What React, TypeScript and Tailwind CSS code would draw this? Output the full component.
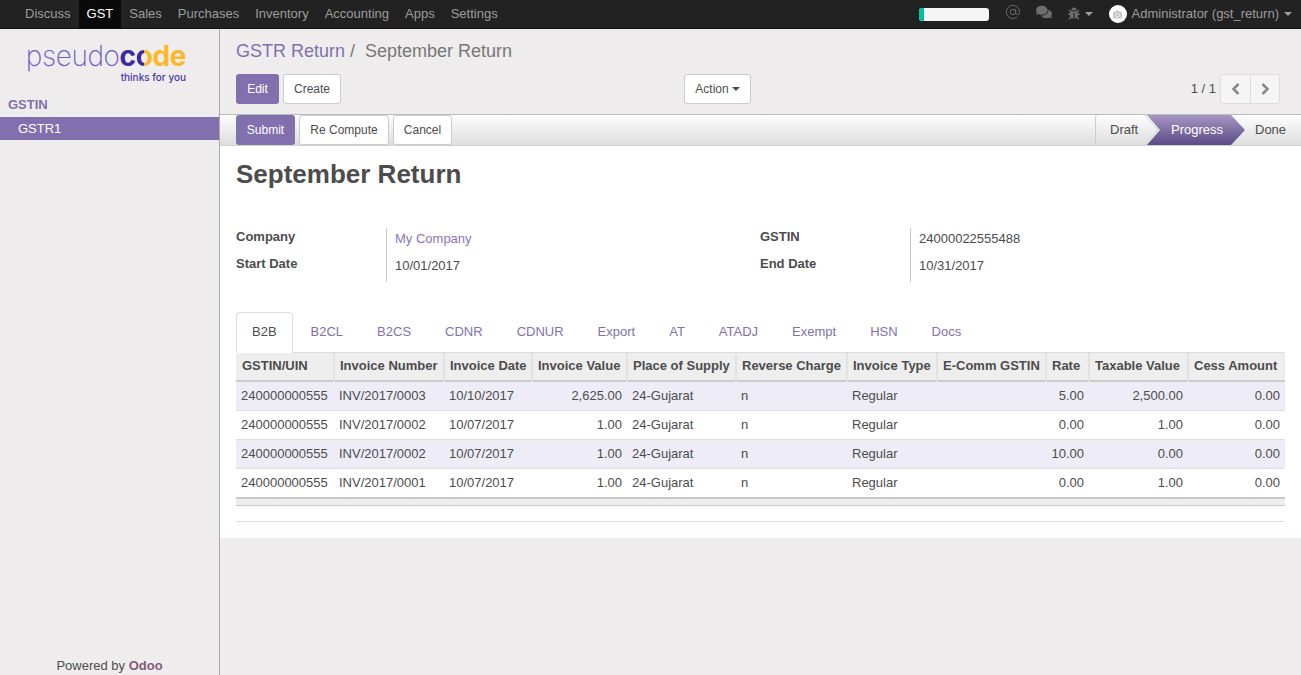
import React from "react";
import { FaComments, FaBug, FaCamera } from "react-icons/fa";
import { AtSign } from "lucide-react";

const nav = ["Discuss", "GST", "Sales", "Purchases", "Inventory", "Accounting", "Apps", "Settings"];
const tabs = ["B2B", "B2CL", "B2CS", "CDNR", "CDNUR", "Export", "AT", "ATADJ", "Exempt", "HSN", "Docs"];
const cols = [
  { t: "GSTIN/UIN", w: 98 },
  { t: "Invoice Number", w: 110 },
  { t: "Invoice Date", w: 88 },
  { t: "Invoice Value", w: 95, r: true },
  { t: "Place of Supply", w: 109 },
  { t: "Reverse Charge", w: 111 },
  { t: "Invoice Type", w: 90 },
  { t: "E-Comm GSTIN", w: 109 },
  { t: "Rate", w: 43, r: true },
  { t: "Taxable Value", w: 99, r: true },
  { t: "Cess Amount", w: 97, r: true },
];
const rows = [
  ["240000000555", "INV/2017/0003", "10/10/2017", "2,625.00", "24-Gujarat", "n", "Regular", "", "5.00", "2,500.00", "0.00"],
  ["240000000555", "INV/2017/0002", "10/07/2017", "1.00", "24-Gujarat", "n", "Regular", "", "0.00", "1.00", "0.00"],
  ["240000000555", "INV/2017/0002", "10/07/2017", "1.00", "24-Gujarat", "n", "Regular", "", "10.00", "0.00", "0.00"],
  ["240000000555", "INV/2017/0001", "10/07/2017", "1.00", "24-Gujarat", "n", "Regular", "", "0.00", "1.00", "0.00"],
];

function Caret({ className }: { className?: string }) {
  return <span className={"inline-block w-0 h-0 border-x-4 border-x-transparent border-t-4 border-t-current align-middle " + (className ?? "")} />;
}

function Chevron({ dir }: { dir: "l" | "r" }) {
  return (
    <svg width="9" height="12" viewBox="0 0 9 12" fill="none" stroke="#8a8a8a" strokeWidth="2.6">
      <polyline points={dir === "l" ? "7.5,1 2.5,6 7.5,11" : "1.5,1 6.5,6 1.5,11"} />
    </svg>
  );
}

function Logo() {
  return (
    <div className="flex flex-col items-end w-[158px] ml-[28px] mt-[12px] h-[44px] font-['Inter',sans-serif]">
      <div className="text-[28px] leading-[30px] tracking-[-0.4px] whitespace-nowrap">
        <span className="font-extralight text-[#6e5fc4]">pseudo</span>
        <span className="font-bold text-[#3b2a9e]">c</span>
        <span className="font-bold text-transparent bg-clip-text bg-[linear-gradient(90deg,#3b2a9e_50%,#fdb827_50%)]">o</span>
        <span className="font-bold text-[#fdb827]">de</span>
      </div>
      <div className="text-[10px] leading-[12px] font-medium text-[#4a3aa5]">thinks for you</div>
    </div>
  );
}

export default function App() {
  return (
    <div className="w-[1301px] h-[675px] overflow-hidden flex flex-col bg-[#eeeced] text-[13px] leading-[18.57px] text-[#4c4c4c] font-['Liberation_Sans',Arial,sans-serif]">
      <header className="h-[29px] shrink-0 bg-[#222222] border-b border-[#101010] flex items-center text-[#9d9d9d]">
        <nav className="flex h-full pl-[17px]">
          {nav.map((n) => (
            <a key={n} className={"px-2 flex items-center " + (n === "GST" ? "bg-[#0a0a0a] text-white" : "")}>{n}</a>
          ))}
        </nav>
        <div className="ml-auto flex items-center h-full text-[#6d6d6d] pr-[9px]">
          <div className="w-[70px] h-[13px] rounded-[3px] bg-[#f5f5f5] overflow-hidden mr-[16px]">
            <div className="w-[5px] h-full bg-[#00c19f]" />
          </div>
          <AtSign className="w-[16px] h-[16px] mr-[15px] -mt-[5px]" strokeWidth={1.4} />
          <FaComments className="w-[16px] h-[16px] mr-[16px] -mt-[4px]" />
          <FaBug className="w-[12px] h-[13px] mr-[5px] -mt-[1px]" />
          <Caret className="mr-[16px] text-[#9d9d9d]" />
          <div className="w-[18px] h-[18px] rounded-full bg-white flex items-center justify-center mr-[5px]">
            <FaCamera className="w-[9px] h-[9px] text-[#c8c8c8]" />
          </div>
          <span className="text-[#9d9d9d] mr-[5px] whitespace-nowrap">Administrator (gst_return)</span>
          <Caret className="text-[#9d9d9d]" />
        </div>
      </header>

      <div className="flex flex-1 min-h-0">
        <aside className="w-[220px] shrink-0 border-r border-[#aaaaaa] flex flex-col">
          <Logo />
          <div className="pl-2 mt-[8px] h-[22px] pt-[2px] flex items-center font-bold text-[#8270ae]">GSTIN</div>
          <div className="h-[23px] mt-[2px] w-[219px] bg-[#8270ae] text-white pl-[18px] pt-[2px] flex items-center">GSTR1</div>
          <div className="mt-auto h-[20px] flex items-center justify-center pt-[2px] text-[#4c4c4c]">
            Powered by&nbsp;<b className="text-[#875a7b]">Odoo</b>
          </div>
        </aside>

        <main className="flex-1 min-w-0 flex flex-col">
          <div className="h-[85px] shrink-0 px-4 pt-[10px]">
            <div className="text-[18px] leading-[25px] whitespace-nowrap">
              <span className="text-[#8270ae]">GSTR Return</span>
              <span className="text-[#777777]"> /&nbsp; September Return</span>
            </div>
            <div className="flex items-center mt-[10px] h-[30px]">
              <button className="h-[30px] w-[43px] rounded-[3px] bg-[#8270ae] text-white text-[12px]">Edit</button>
              <button className="h-[30px] w-[58px] ml-1 rounded-[3px] bg-white border border-[#cccccc] text-[12px]">Create</button>
              <button className="h-[30px] w-[67px] ml-[343px] rounded-[3px] bg-white border border-[#cccccc] text-[12px] flex items-center justify-center gap-[3px]">Action <Caret /></button>
              <span className="ml-auto mr-1 text-[#4c4c4c]">1 / 1</span>
              <div className="flex h-[30px] mr-[5px]">
                <button className="w-[31px] rounded-l-[3px] bg-[#f5f5f5] border border-[#dddddd] flex items-center justify-center"><Chevron dir="l" /></button>
                <button className="w-[30px] -ml-px rounded-r-[3px] bg-[#f5f5f5] border border-[#dddddd] flex items-center justify-center"><Chevron dir="r" /></button>
              </div>
            </div>
          </div>

          <div className="h-[32px] shrink-0 border-y border-[#bbbbbb] border-b-[#d0d0d0] bg-[linear-gradient(#fdfdfd,#dedede)] flex items-stretch pl-4">
            <button className="w-[59px] rounded-[3px] bg-[#8270ae] text-white text-[12px]">Submit</button>
            <button className="w-[90px] ml-1 rounded-[3px] bg-white border border-[#cccccc] text-[12px]">Re Compute</button>
            <button className="w-[59px] ml-1 rounded-[3px] bg-white border border-[#cccccc] text-[12px]">Cancel</button>
            <div className="ml-auto flex items-stretch relative">
              <div className="w-[66px] border-l border-[#cccccc] rounded-l-[3px] pl-[14px] flex items-center">Draft</div>
              <svg className="absolute left-[50px] top-0" width="16" height="30" viewBox="0 0 16 30" fill="none" stroke="#d4d4d4">
                <polyline points="0,0 13,15 0,30" />
              </svg>
              <div className="w-[98px] -ml-[14px] text-white flex items-center pl-[24px] bg-[linear-gradient(#a797c4,#5a4986)] [clip-path:polygon(0_0,84px_0,98px_50%,84px_100%,0_100%,13px_50%)]">Progress</div>
              <div className="w-[56px] pl-[10px] flex items-center">Done</div>
            </div>
          </div>

          <div className="h-[392px] shrink-0 bg-white px-4">
            <h1 className="text-[26px] leading-[32px] font-bold text-[#4c4c4c] mt-[12px]">September Return</h1>
            <div className="flex mt-[38px]">
              <div className="w-[524px] grid grid-cols-[150px_1fr]">
                <div className="font-bold h-[27px]">Company</div>
                <div className="border-l border-[#cccccc] pl-2 h-[27px] pt-[2px] text-[#8a74bd]">My Company</div>
                <div className="font-bold h-[27px]">Start Date</div>
                <div className="border-l border-[#cccccc] pl-2 h-[27px] pt-[2px]">10/01/2017</div>
              </div>
              <div className="flex-1 grid grid-cols-[150px_1fr]">
                <div className="font-bold h-[27px]">GSTIN</div>
                <div className="border-l border-[#cccccc] pl-2 h-[27px] pt-[2px]">24000022555488</div>
                <div className="font-bold h-[27px]">End Date</div>
                <div className="border-l border-[#cccccc] pl-2 h-[27px] pt-[2px]">10/31/2017</div>
              </div>
            </div>

            <ul className="flex mt-[30px] border-b border-[#dddddd] h-[41px]">
              {tabs.map((t) => (
                <li key={t} className="mr-[2px]">
                  <a className={"block px-[15px] py-[10px] border rounded-t-[4px] h-[41px] " + (t === "B2B" ? "bg-white border-[#dddddd] border-b-white" : "border-transparent text-[#8270ae]")}>{t}</a>
                </li>
              ))}
            </ul>

            <table className="table-fixed border-collapse w-[1049px]">
              <colgroup>
                {cols.map((c) => <col key={c.t} style={{ width: c.w }} />)}
              </colgroup>
              <thead>
                <tr className="h-[28px] bg-[#eeeeee] border-b-2 border-[#cccccc]">
                  {cols.map((c) => (
                    <th key={c.t} className="text-left font-bold pl-[5px] first:pl-[6px] pr-[5px] pb-[1px] border-r-2 last:border-r-0 border-[#e2e2e2] whitespace-nowrap overflow-hidden">{c.t}</th>
                  ))}
                </tr>
              </thead>
              <tbody>
                {rows.map((r, i) => (
                  <tr key={i} className={"h-[29px] border-b border-[#dddddd] " + (i % 2 === 0 ? "bg-[#eeedf7]" : "bg-white")}>
                    {r.map((v, j) => (
                      <td key={j} className={"px-[5px] pt-[2px] whitespace-nowrap " + (cols[j].r ? "text-right" : "text-left")}>{v}</td>
                    ))}
                  </tr>
                ))}
              </tbody>
            </table>
            <div className="h-[9px] -mt-px bg-[#eeeeee] border-t-2 border-b border-[#c8c8c8]" />
            <div className="mt-[15px] border-t border-[#dddddd]" />
          </div>
        </main>
      </div>
    </div>
  );
}
